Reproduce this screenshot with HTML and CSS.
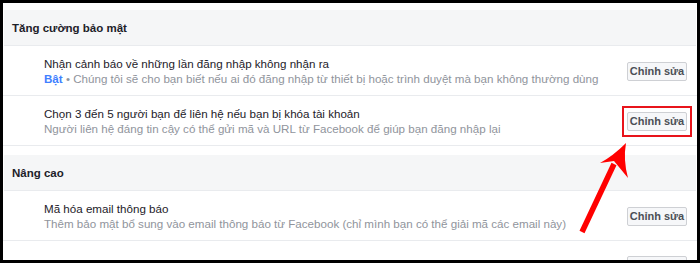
FILE: index.html
```html
<!DOCTYPE html>
<html>

<head>
    <title>Cài đặt bảo mật</title>
    <link rel="stylesheet" href="styles.css">
</head>

<body>
    <div class="frame">
        <div class="panel">
            <div class="section-title">Tăng cường bảo mật</div>
            <div class="setting-row">
                <div class="setting-text">
                    <div class="setting-name">Nhận cảnh báo về những lần đăng nhập không nhận ra</div>
                    <div class="setting-desc"><span class="on">Bật</span> • Chúng tôi sẽ cho bạn biết nếu ai đó đăng nhập từ thiết bị hoặc trình duyệt mà bạn không thường dùng</div>
                </div>
                <button class="edit-btn">Chỉnh sửa</button>
            </div>
            <div class="setting-row">
                <div class="setting-text">
                    <div class="setting-name">Chọn 3 đến 5 người bạn để liên hệ nếu bạn bị khóa tài khoản</div>
                    <div class="setting-desc">Người liên hệ đáng tin cậy có thể gửi mã và URL từ Facebook để giúp bạn đăng nhập lại</div>
                </div>
                <button class="edit-btn">Chỉnh sửa</button>
            </div>

            <div class="section-title spaced">Nâng cao</div>
            <div class="setting-row">
                <div class="setting-text">
                    <div class="setting-name">Mã hóa email thông báo</div>
                    <div class="setting-desc">Thêm bảo mật bổ sung vào email thông báo từ Facebook (chỉ mình bạn có thể giải mã các email này)</div>
                </div>
                <button class="edit-btn">Chỉnh sửa</button>
            </div>
            <div class="setting-row last">
                <div class="setting-text"></div>
                <div class="edit-btn stub"></div>
            </div>
        </div>

        <!-- annotation drawn over the page -->
        <svg class="markup" width="700" height="263" viewBox="0 0 700 263">
            <rect x="623" y="107" width="68" height="29" fill="none" stroke="#e8141b" stroke-width="2" />
            <line x1="582" y1="232" x2="614" y2="164" stroke="#f00" stroke-width="5.5" />
            <path d="M626,143 Q613,156 600,163 L614,161 L628,178 Q623,160 626,143 Z" fill="#f00" />
        </svg>
    </div>
</body>

</html>
```

FILE: styles.css
```css
body {
    margin: 0;
    font-family: 'Liberation Sans', Arial, sans-serif;
    background: #fff;
}

.frame {
    position: relative;
    width: 700px;
    height: 263px;
    box-sizing: border-box;
    border: 3px solid #000;
    overflow: hidden;
    background: #fff;
}

.panel {
    padding-top: 7px;
}

.section-title {
    height: 35px;
    line-height: 37px;
    padding-left: 8px;
    margin: 0 1px;
    background: #f5f6f7;
    border-bottom: 1px solid #e9ebee;
    font-size: 11.5px;
    font-weight: bold;
    color: #1d2129;
}

.section-title.spaced {
    margin-top: 9px;
}

.setting-row {
    display: flex;
    align-items: center;
    gap: 10px;
    padding: 10px 10px 9px 41px;
    border-bottom: 1px solid #e9ebee;
}

.setting-row.last {
    align-items: flex-start;
    padding-top: 15px;
    border-bottom: none;
}

.setting-text {
    flex-grow: 1;
}

.setting-name {
    font-size: 11.6px;
    line-height: 15px;
    color: #1d2129;
}

.setting-desc {
    font-size: 11.6px;
    line-height: 15px;
    color: #90949c;
}

.on {
    color: #4080ff;
    font-weight: bold;
}

.edit-btn {
    flex-shrink: 0;
    width: 60px;
    height: 19px;
    padding: 0;
    box-sizing: border-box;
    background: #f6f7f9;
    border: 1px solid #ced0d4;
    border-radius: 2px;
    font-family: 'Liberation Sans', Arial, sans-serif;
    font-size: 11px;
    font-weight: bold;
    color: #4b4f56;
}

.markup {
    position: absolute;
    left: -3px;
    top: -3px;
}
```
